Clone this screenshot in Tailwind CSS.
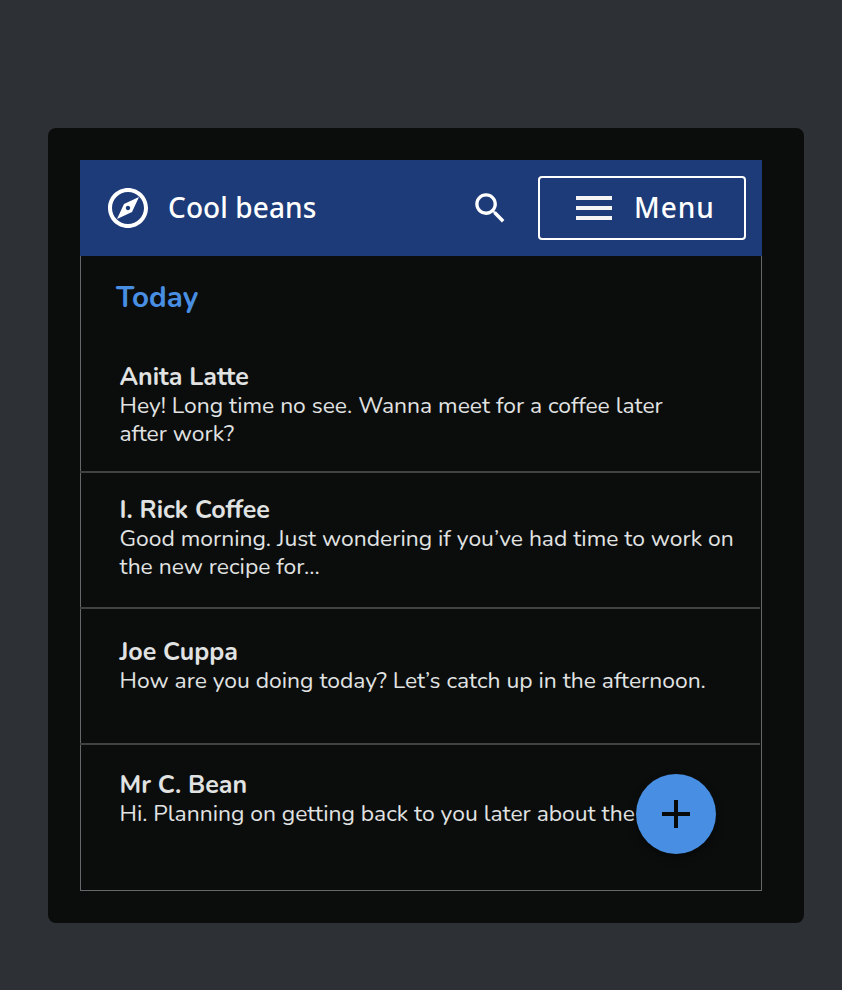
<!DOCTYPE html>
<html lang="en">
<head>
<meta charset="utf-8">
<title>Cool beans</title>
<script src="https://cdn.jsdelivr.net/npm/@tailwindcss/browser@4"></script>
</head>
<body class="h-[990px] overflow-hidden bg-[#2d3035] pt-32 pl-12 font-['Nunito','Lato',sans-serif] text-[#e1e3e3]">
<main class="h-[795px] w-[756px] rounded-lg bg-[#0b0d0c] p-8">
  <div class="relative flex h-[731px] w-[682px] flex-col">
    <header class="flex h-24 shrink-0 items-center bg-[#1d3b78] pr-4 pl-6 font-['Noto_Sans',sans-serif] text-[28px] font-medium text-white">
      <svg class="size-12 fill-current" viewBox="0 0 24 24"><path d="M12 2C6.48 2 2 6.48 2 12s4.48 10 10 10 10-4.48 10-10S17.52 2 12 2zm0 18c-4.41 0-8-3.59-8-8s3.59-8 8-8 8 3.59 8 8-3.59 8-8 8zm-5.5-2.5l7.51-3.49L17.5 6.5 9.99 9.99 6.5 17.5zm5.5-6.6c.61 0 1.1.49 1.1 1.1s-.49 1.1-1.1 1.1-1.1-.49-1.1-1.1.49-1.1 1.1-1.1z"/></svg>
      <h1 class="ml-4 pb-0.5 tracking-[0.1px] whitespace-nowrap">Cool beans</h1>
      <svg class="mr-7 ml-auto size-10 fill-current" viewBox="-0.15 -0.15 24 24"><path d="M15.5 14h-.79l-.28-.27C15.41 12.59 16 11.11 16 9.5 16 5.91 13.09 3 9.5 3S3 5.91 3 9.5 5.91 16 9.5 16c1.61 0 3.09-.59 4.23-1.57l.27.28v.79l5 4.99L20.49 19l-4.99-5zm-6 0C7.01 14 5 11.99 5 9.5S7.01 5 9.5 5 14 7.01 14 9.5 11.99 14 9.5 14z"/></svg>
      <button class="flex h-16 w-52 items-center rounded border-2 border-white pl-[30px] tracking-[1px]">
        <svg class="size-12 fill-[#f4f4f4]" viewBox="0 0 24 24"><path d="M3 18h18v-2H3v2zm0-5h18v-2H3v2zm0-7v2h18V6H3z"/></svg>
        <span class="ml-4 pb-0.5">Menu</span>
      </button>
    </header>
    <section class="flex grow flex-col border-x border-b border-[#65676a]">
      <h2 class="h-[84px] pt-[23px] pl-[35px] text-[29.5px] leading-9 font-bold text-[#488fe3]">Today</h2>
      <article class="-ml-px h-[133px] w-[680px] border-b-2 border-[#404242] pt-[22px] pl-[39.5px] text-[22.87px] leading-7">
        <h3 class="text-[25px] leading-[30px] font-bold">Anita Latte</h3>
        <p class="w-[560px]">Hey! Long time no see. Wanna meet for a coffee later after work?</p>
      </article>
      <article class="-ml-px h-[136px] w-[680px] border-b-2 border-[#404242] pt-[22px] pl-[39.5px] text-[22.87px] leading-7">
        <h3 class="text-[25px] leading-[30px] font-bold">I. Rick Coffee</h3>
        <p class="w-[630px]">Good morning. Just wondering if you’ve had time to work on the new recipe for...</p>
      </article>
      <article class="-ml-px h-[136px] w-[680px] border-b-2 border-[#404242] pt-[28px] pl-[39.5px] text-[22.87px] leading-7">
        <h3 class="text-[25px] leading-[30px] font-bold">Joe Cuppa</h3>
        <p class="whitespace-nowrap">How are you doing today? Let’s catch up in the afternoon.</p>
      </article>
      <article class="-ml-px w-[680px] pt-[25px] pl-[39.5px] text-[22.87px] leading-7">
        <h3 class="text-[25px] leading-[30px] font-bold">Mr C. Bean</h3>
        <p class="whitespace-nowrap">Hi. Planning on getting back to you later about the</p>
      </article>
    </section>
    <button aria-label="New message" class="absolute right-[46px] bottom-[37px] flex size-20 items-center justify-center rounded-full bg-[#488fe3] shadow-[0_4px_8px_rgba(0,0,0,0.4)]">
      <svg class="size-12 fill-[#080a0a]" viewBox="0 0 24 24"><path d="M19 13h-6v6h-2v-6H5v-2h6V5h2v6h6v2z"/></svg>
    </button>
  </div>
</main>
</body>
</html>
